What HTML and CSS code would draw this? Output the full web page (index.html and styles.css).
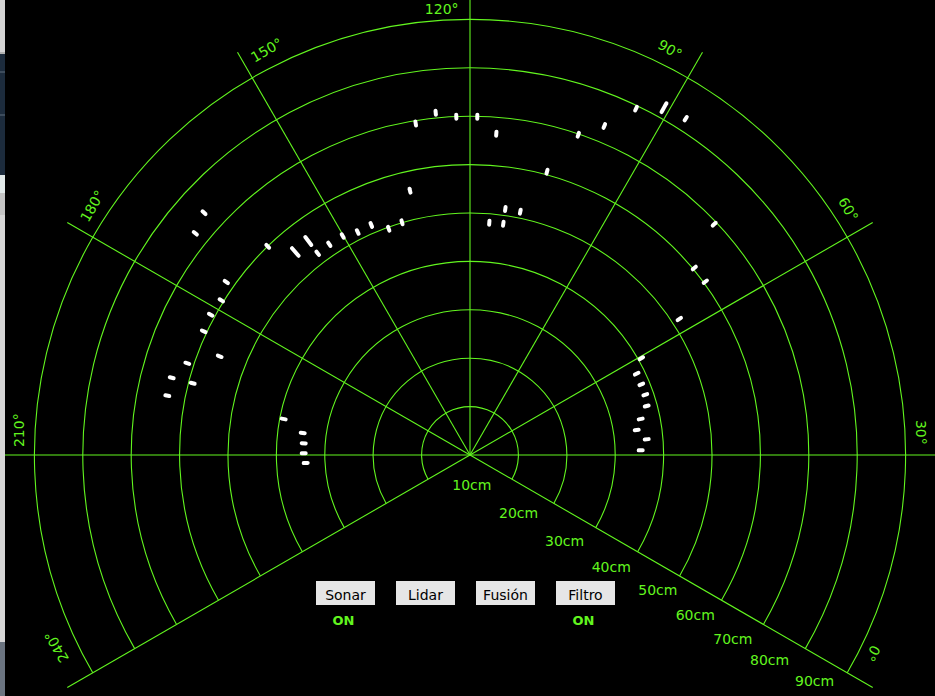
FILE: index.html
```html
<!DOCTYPE html>
<html lang="es">
<head>
<meta charset="utf-8">
<title>Radar</title>
<link rel="stylesheet" href="styles.css">
</head>
<body>
<div class="screen">
  <div class="strip"></div>
  <svg class="radar" width="930" height="696" viewBox="5 0 930 696" xmlns="http://www.w3.org/2000/svg">
    <defs>
      <line id="dot" class="dot" x1="-2" y1="0" x2="2" y2="0"/>
      <line id="dot2" class="dot" x1="-5" y1="0" x2="5" y2="0"/>
    </defs>
    <g class="rings">
      <path class="ring" d="M428.084,479.2 A48.4,48.4 0 1 1 511.916,479.2"/>
      <path class="ring" d="M386.169,503.4 A96.8,96.8 0 1 1 553.831,503.4"/>
      <path class="ring" d="M344.253,527.6 A145.2,145.2 0 1 1 595.747,527.6"/>
      <path class="ring" d="M302.337,551.8 A193.6,193.6 0 1 1 637.663,551.8"/>
      <path class="ring" d="M260.422,576 A242,242 0 1 1 679.578,576"/>
      <path class="ring" d="M218.506,600.2 A290.4,290.4 0 1 1 721.494,600.2"/>
      <path class="ring" d="M176.590,624.4 A338.8,338.8 0 1 1 763.410,624.4"/>
      <path class="ring" d="M134.675,648.6 A387.2,387.2 0 1 1 805.325,648.6"/>
      <path class="ring" d="M92.759,672.8 A435.6,435.6 0 1 1 847.241,672.8"/>
    </g>
    <g class="rays">
      <line class="ray" x1="5" y1="455" x2="935" y2="455"/>
      <line class="ray" x1="470" y1="455" x2="470" y2="-10"/>
      <line class="ray" x1="470" y1="455" x2="872.7" y2="222.5"/>
      <line class="ray" x1="470" y1="455" x2="702.5" y2="52.3"/>
      <line class="ray" x1="470" y1="455" x2="237.5" y2="52.3"/>
      <line class="ray" x1="470" y1="455" x2="67.3" y2="222.5"/>
      <line class="ray" x1="470" y1="455" x2="67.3" y2="687.5"/>
      <line class="ray" x1="470" y1="455" x2="872.7" y2="687.5"/>
    </g>
    <g class="degrees">
      <text class="deg" transform="translate(441.7 9.2)">120°</text>
      <text class="deg" transform="translate(266.7 50) rotate(-30)">150°</text>
      <text class="deg" transform="translate(670 49.3) rotate(30)">90°</text>
      <text class="deg" transform="translate(848.3 209.3) rotate(60)">60°</text>
      <text class="deg" transform="translate(920.7 432.3) rotate(90)">30°</text>
      <text class="deg" transform="translate(872.7 653.5) rotate(120)">0°</text>
      <text class="deg" transform="translate(92.3 206) rotate(-60)">180°</text>
      <text class="deg" transform="translate(18.6 430.2) rotate(-90)">210°</text>
      <text class="deg" transform="translate(56.5 646.7) rotate(-120)">240°</text>
    </g>
    <g class="ranges">
      <text class="range" x="452.3" y="490">10cm</text>
      <text class="range" x="499" y="518.3">20cm</text>
      <text class="range" x="545" y="546">30cm</text>
      <text class="range" x="591.7" y="571.7">40cm</text>
      <text class="range" x="638.3" y="595">50cm</text>
      <text class="range" x="675.7" y="620">60cm</text>
      <text class="range" x="713.3" y="644">70cm</text>
      <text class="range" x="750" y="665">80cm</text>
      <text class="range" x="795" y="685.7">90cm</text>
    </g>
    <g class="hits">
      <use href="#dot" transform="translate(435.7 112.7) rotate(-95.7)"/>
      <use href="#dot" transform="translate(415.7 123.5) rotate(-99.3)"/>
      <use href="#dot" transform="translate(456.3 116.7) rotate(-92.3)"/>
      <use href="#dot" transform="translate(477.3 116.7) rotate(-88.8)"/>
      <use href="#dot" transform="translate(496.3 133.7) rotate(-85.3)"/>
      <use href="#dot" transform="translate(578.3 134.7) rotate(-71.3)"/>
      <use href="#dot" transform="translate(604.3 126) rotate(-67.8)"/>
      <use href="#dot" transform="translate(636 108.7) rotate(-64.4)"/>
      <use href="#dot2" transform="translate(664 107.7) rotate(-60.8)"/>
      <use href="#dot" transform="translate(685.7 118.7) rotate(-57.3)"/>
      <use href="#dot" transform="translate(547 171.7) rotate(-74.8)"/>
      <use href="#dot" transform="translate(410 190.7) rotate(-102.8)"/>
      <use href="#dot" transform="translate(505.3 209) rotate(-81.8)"/>
      <use href="#dot" transform="translate(520.3 211.7) rotate(-78.3)"/>
      <use href="#dot" transform="translate(489.3 222.7) rotate(-85.3)"/>
      <use href="#dot" transform="translate(503.3 223.7) rotate(-81.8)"/>
      <use href="#dot" transform="translate(402 222.3) rotate(-106.3)"/>
      <use href="#dot" transform="translate(714.2 224.2) rotate(-43.4)"/>
      <use href="#dot" transform="translate(388.7 228.7) rotate(-109.8)"/>
      <use href="#dot" transform="translate(371.3 225) rotate(-113.2)"/>
      <use href="#dot" transform="translate(357.7 232) rotate(-116.7)"/>
      <use href="#dot" transform="translate(342.7 236) rotate(-120.2)"/>
      <use href="#dot" transform="translate(329.3 244.3) rotate(-123.7)"/>
      <use href="#dot" transform="translate(317.7 253.3) rotate(-127)"/>
      <use href="#dot2" transform="translate(308.3 241) rotate(-127.1)"/>
      <use href="#dot2" transform="translate(295.3 252) rotate(-130.7)"/>
      <use href="#dot" transform="translate(267.7 246.3) rotate(-134.1)"/>
      <use href="#dot" transform="translate(204 212.7) rotate(-137.7)"/>
      <use href="#dot" transform="translate(195.3 233.3) rotate(-141.1)"/>
      <use href="#dot" transform="translate(226.3 282) rotate(-144.6)"/>
      <use href="#dot" transform="translate(221.3 300.3) rotate(-148.1)"/>
      <use href="#dot" transform="translate(210.7 314.7) rotate(-151.6)"/>
      <use href="#dot" transform="translate(203.7 331.3) rotate(-155.1)"/>
      <use href="#dot" transform="translate(219.7 356.3) rotate(-158.5)"/>
      <use href="#dot" transform="translate(187.3 363.3) rotate(-162)"/>
      <use href="#dot" transform="translate(171.7 377.7) rotate(-165.5)"/>
      <use href="#dot" transform="translate(192.7 383.3) rotate(-165.5)"/>
      <use href="#dot" transform="translate(167.3 395.7) rotate(-168.9)"/>
      <use href="#dot" transform="translate(283.7 419) rotate(-169.1)"/>
      <use href="#dot" transform="translate(302.7 433) rotate(-172.5)"/>
      <use href="#dot" transform="translate(303.7 443.3) rotate(-176)"/>
      <use href="#dot" transform="translate(303.7 453.3) rotate(-179.4)"/>
      <use href="#dot" transform="translate(305.7 463) rotate(177.2)"/>
      <use href="#dot" transform="translate(694.3 268) rotate(-39.8)"/>
      <use href="#dot" transform="translate(705.3 281.7) rotate(-36.4)"/>
      <use href="#dot" transform="translate(679.3 319) rotate(-33)"/>
      <use href="#dot" transform="translate(641.3 358.3) rotate(-29.4)"/>
      <use href="#dot" transform="translate(636.7 373.7) rotate(-26)"/>
      <use href="#dot" transform="translate(641.3 384.3) rotate(-22.4)"/>
      <use href="#dot" transform="translate(645.3 394.7) rotate(-19)"/>
      <use href="#dot" transform="translate(646.7 406) rotate(-15.5)"/>
      <use href="#dot" transform="translate(640.7 419) rotate(-11.9)"/>
      <use href="#dot" transform="translate(636.7 430) rotate(-8.5)"/>
      <use href="#dot" transform="translate(646.7 439.3) rotate(-5.1)"/>
      <use href="#dot" transform="translate(640.7 450.3) rotate(-1.6)"/>
    </g>
  </svg>
  <div class="controls">
    <div class="control">
      <div class="btn">Sonar</div>
      <div class="state">ON</div>
    </div>
    <div class="control">
      <div class="btn">Lidar</div>
    </div>
    <div class="control">
      <div class="btn">Fusión</div>
    </div>
    <div class="control">
      <div class="btn">Filtro</div>
      <div class="state">ON</div>
    </div>
  </div>
</div>
</body>
</html>
```
FILE: styles.css
```css
html, body {
  margin: 0;
  padding: 0;
  background: #000;
}

.screen {
  position: relative;
  display: flex;
  width: 935px;
  height: 696px;
  overflow: hidden;
  background: #000;
  font-family: "DejaVu Sans", "Liberation Sans", sans-serif;
}

.strip {
  flex: 0 0 5px;
  width: 5px;
  height: 696px;
  background: linear-gradient(to bottom,
    #d4d4d4 0px, #d4d4d4 52px,
    #b0b0b0 52px, #b0b0b0 54px,
    #1c2b3c 54px, #1c2b3c 71px,
    #3d4c5c 71px, #3d4c5c 73px,
    #1c2b3c 73px, #1c2b3c 114px,
    #3d4c5c 114px, #3d4c5c 116px,
    #1c2b3c 116px, #1c2b3c 175px,
    #e2eaea 175px, #e2eaea 193px,
    #c4c4c4 193px, #c4c4c4 215px,
    #d6d6d6 215px, #d6d6d6 642px,
    #6b7480 642px, #6b7480 696px);
}

.radar {
  display: block;
  flex: 0 0 930px;
}

.ring,
.ray {
  fill: none;
  stroke: rgb(98, 245, 31);
  stroke-width: 1.1;
}

.dot {
  stroke: #fff;
  stroke-width: 4;
  stroke-linecap: round;
}

.deg,
.range {
  fill: rgb(98, 245, 31);
  font-family: "DejaVu Sans", "Liberation Sans", sans-serif;
  font-size: 14px;
}

.deg {
  text-anchor: middle;
  dominant-baseline: central;
}

.range {
  text-anchor: start;
}

.controls {
  position: absolute;
  left: 316px;
  top: 581px;
  display: flex;
  gap: 21px;
}

.control {
  display: flex;
  flex-direction: column;
  align-items: center;
  width: 59px;
}

.btn {
  width: 59px;
  height: 24px;
  background: #e6e6e6;
  color: #000;
  font-size: 14px;
  line-height: 28px;
  text-align: center;
  overflow: visible;
}

.state {
  margin-top: 8px;
  padding-right: 4px;
  color: rgb(98, 245, 31);
  font-weight: bold;
  font-size: 13px;
  line-height: 16px;
}
```
